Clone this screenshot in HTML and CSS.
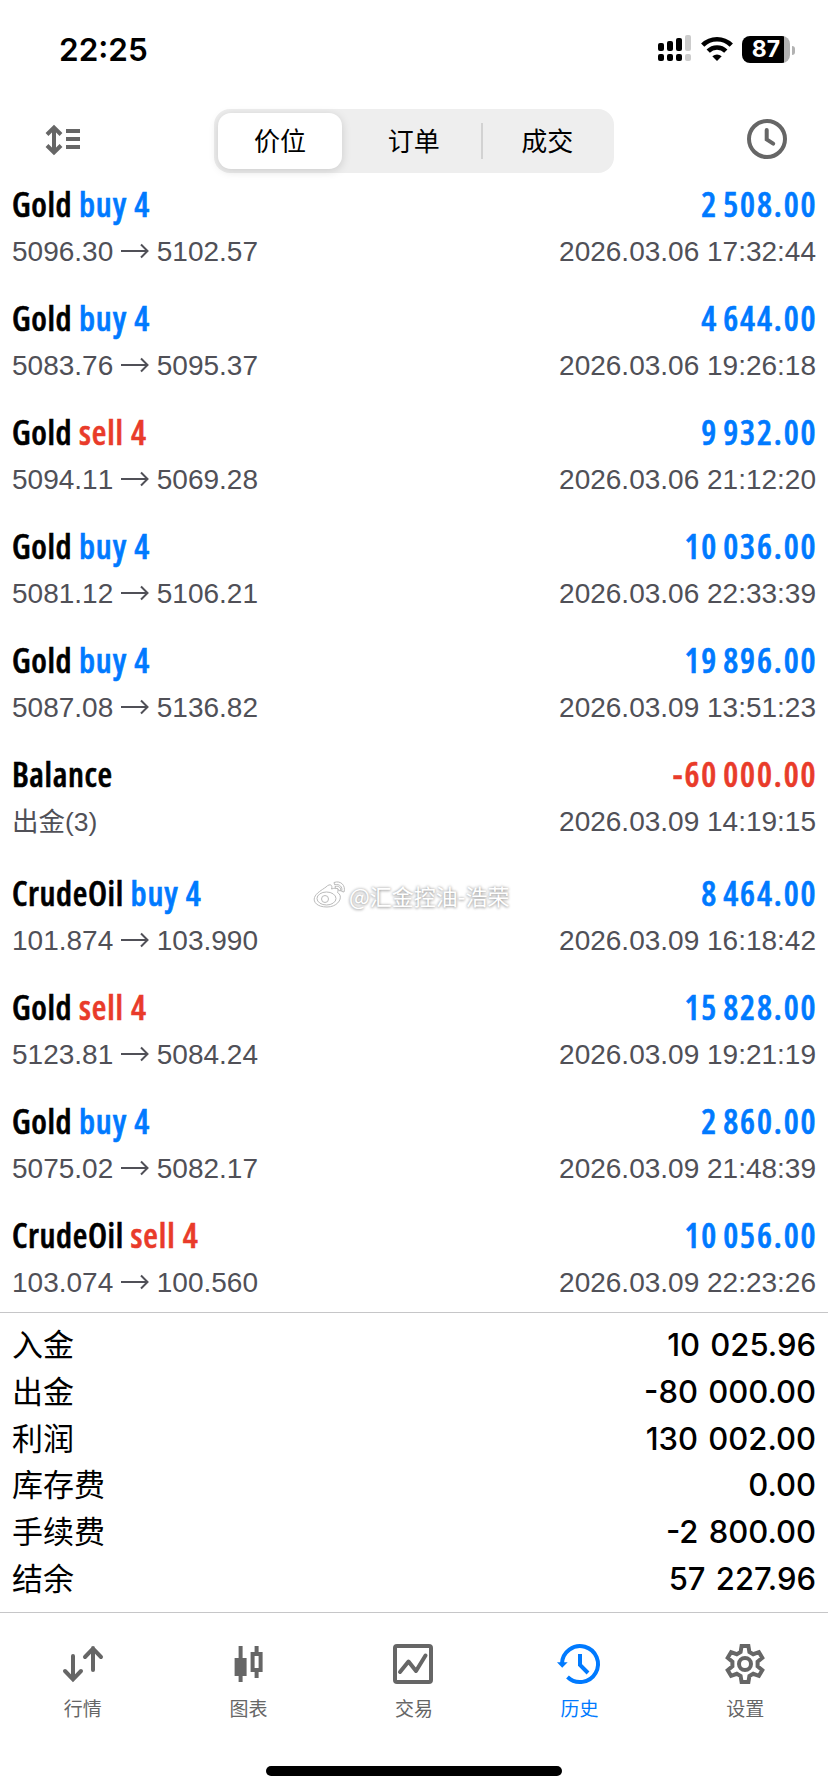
FILE: index.html
```html
<!DOCTYPE html>
<html lang="zh-CN">
<head>
    <meta charset="UTF-8">
    <meta name="viewport" content="width=device-width, initial-scale=1.0">
    <title>历史</title>
    <link rel="stylesheet" href="styles.css">
</head>
<body>

    <div class="status-bar">
        <span class="time">22:25</span>
        <div class="status-icons">
            <svg class="signal" width="34" height="28" viewBox="0 0 34 28">
                <rect x="0" y="8" width="6" height="8" rx="2"/>
                <rect x="9" y="6" width="6" height="10" rx="2"/>
                <rect x="18" y="3" width="6" height="13" rx="2"/>
                <rect class="off" x="27" y="0" width="6" height="16" rx="2"/>
                <rect x="0" y="19" width="6" height="7" rx="2"/>
                <rect x="9" y="19" width="6" height="7" rx="2"/>
                <rect x="18" y="19" width="6" height="7" rx="2"/>
                <rect class="off" x="27" y="19" width="6" height="7" rx="2"/>
            </svg>
            <svg class="wifi" width="32" height="28" viewBox="0 0 32 28">
                <path d="M1.7 10.2A20.3 20.3 0 0 1 30.3 10.2" fill="none" stroke="#000" stroke-width="4.6"/>
                <path d="M7.2 16.2A12.4 12.4 0 0 1 24.8 16.2" fill="none" stroke="#000" stroke-width="4.6"/>
                <path d="M16 26L11.3 21.3Q16 17.6 20.7 21.3Z"/>
            </svg>
            <div class="battery"><span>87</span></div>
            <div class="battery-cap"></div>
        </div>
    </div>

    <div class="toolbar">
        <svg class="sort" width="36" height="32" viewBox="0 0 36 32">
            <path d="M9 4V28M2 10.5L9 3.5L16 10.5M2 21.5L9 28.5L16 21.5M21 7H35M21 15H35M21 23H35"/>
        </svg>
        <div class="segment">
            <div class="seg active">价位</div>
            <div class="seg">订单</div>
            <div class="seg last">成交</div>
        </div>
        <svg class="clock" width="40" height="40" viewBox="0 0 40 40">
            <circle cx="20" cy="20" r="18"/>
            <path d="M19.7 11V20.4L26.2 24.6" stroke-linecap="round"/>
        </svg>
    </div>

    <div class="list">
        <div class="row">
            <div class="title"><b>Gold <i class="buy">buy 4</i></b><b class="profit">2 508.00</b></div>
            <div class="detail"><span>5096.30 <svg class="arrow" viewBox="0 0 28 16"><path d="M0 8H26.5M20 1.5L26.5 8L20 14.5"/></svg> 5102.57</span><span>2026.03.06 17:32:44</span></div>
        </div>
        <div class="row">
            <div class="title"><b>Gold <i class="buy">buy 4</i></b><b class="profit">4 644.00</b></div>
            <div class="detail"><span>5083.76 <svg class="arrow" viewBox="0 0 28 16"><path d="M0 8H26.5M20 1.5L26.5 8L20 14.5"/></svg> 5095.37</span><span>2026.03.06 19:26:18</span></div>
        </div>
        <div class="row">
            <div class="title"><b>Gold <i class="sell">sell 4</i></b><b class="profit">9 932.00</b></div>
            <div class="detail"><span>5094.11 <svg class="arrow" viewBox="0 0 28 16"><path d="M0 8H26.5M20 1.5L26.5 8L20 14.5"/></svg> 5069.28</span><span>2026.03.06 21:12:20</span></div>
        </div>
        <div class="row">
            <div class="title"><b>Gold <i class="buy">buy 4</i></b><b class="profit">10 036.00</b></div>
            <div class="detail"><span>5081.12 <svg class="arrow" viewBox="0 0 28 16"><path d="M0 8H26.5M20 1.5L26.5 8L20 14.5"/></svg> 5106.21</span><span>2026.03.06 22:33:39</span></div>
        </div>
        <div class="row">
            <div class="title"><b>Gold <i class="buy">buy 4</i></b><b class="profit">19 896.00</b></div>
            <div class="detail"><span>5087.08 <svg class="arrow" viewBox="0 0 28 16"><path d="M0 8H26.5M20 1.5L26.5 8L20 14.5"/></svg> 5136.82</span><span>2026.03.09 13:51:23</span></div>
        </div>
        <div class="row balance">
            <div class="title"><b>Balance</b><b class="profit loss">-60 000.00</b></div>
            <div class="detail"><span class="comment">出金(3)</span><span>2026.03.09 14:19:15</span></div>
        </div>
        <div class="row">
            <div class="title"><b>CrudeOil <i class="buy">buy 4</i></b><b class="profit">8 464.00</b></div>
            <div class="detail"><span>101.874 <svg class="arrow" viewBox="0 0 28 16"><path d="M0 8H26.5M20 1.5L26.5 8L20 14.5"/></svg> 103.990</span><span>2026.03.09 16:18:42</span></div>
        </div>
        <div class="row">
            <div class="title"><b>Gold <i class="sell">sell 4</i></b><b class="profit">15 828.00</b></div>
            <div class="detail"><span>5123.81 <svg class="arrow" viewBox="0 0 28 16"><path d="M0 8H26.5M20 1.5L26.5 8L20 14.5"/></svg> 5084.24</span><span>2026.03.09 19:21:19</span></div>
        </div>
        <div class="row">
            <div class="title"><b>Gold <i class="buy">buy 4</i></b><b class="profit">2 860.00</b></div>
            <div class="detail"><span>5075.02 <svg class="arrow" viewBox="0 0 28 16"><path d="M0 8H26.5M20 1.5L26.5 8L20 14.5"/></svg> 5082.17</span><span>2026.03.09 21:48:39</span></div>
        </div>
        <div class="row">
            <div class="title"><b>CrudeOil <i class="sell">sell 4</i></b><b class="profit">10 056.00</b></div>
            <div class="detail"><span>103.074 <svg class="arrow" viewBox="0 0 28 16"><path d="M0 8H26.5M20 1.5L26.5 8L20 14.5"/></svg> 100.560</span><span>2026.03.09 22:23:26</span></div>
        </div>
    </div>

    <div class="summary">
        <div class="sum-row"><span>入金</span><span class="num">10 025.96</span></div>
        <div class="sum-row"><span>出金</span><span class="num">-80 000.00</span></div>
        <div class="sum-row"><span>利润</span><span class="num">130 002.00</span></div>
        <div class="sum-row"><span>库存费</span><span class="num">0.00</span></div>
        <div class="sum-row"><span>手续费</span><span class="num">-2 800.00</span></div>
        <div class="sum-row"><span>结余</span><span class="num">57 227.96</span></div>
    </div>

    <div class="tabs">
        <a class="tab">
            <svg width="44" height="44" viewBox="0 0 44 44">
                <path d="M12 14V37M4 29L12 37.4L20 29M32 28V6M24 15L32 6.6L40 15" stroke-linecap="round"/>
            </svg>
            <span>行情</span>
        </a>
        <a class="tab">
            <svg width="44" height="44" viewBox="0 0 44 44">
                <path d="M14.6 4V40M30.6 4V12M30.6 30V36"/>
                <path d="M14.6 16V34" stroke-width="12"/>
                <rect x="26.6" y="12" width="8" height="16"/>
            </svg>
            <span>图表</span>
        </a>
        <a class="tab">
            <svg width="44" height="44" viewBox="0 0 44 44">
                <rect x="3" y="4" width="36" height="36" rx="2"/>
                <path d="M8 30L16.5 19.5L24 29L33.5 13.5" stroke-linecap="round" stroke-linejoin="round"/>
            </svg>
            <span>交易</span>
        </a>
        <a class="tab current">
            <svg width="44" height="44" viewBox="0 0 44 44">
                <path d="M4 21.5A18 18 0 1 1 9.5 35M22 12V23L30 31"/>
                <path class="solid" d="M-1 20.3H9.7L4.2 25.7Z"/>
            </svg>
            <span>历史</span>
        </a>
        <a class="tab">
            <svg width="44" height="44" viewBox="-22 -22 44 44">
                <path d="M-4.4-12L-3.4-18H3.4L4.4-12L8.2-9.8L13.9-11.9L17.3-6.1L12.6-2.2V2.2L17.3 6.1L13.9 11.9L8.2 9.8L4.4 12L3.4 18H-3.4L-4.4 12L-8.2 9.8L-13.9 11.9L-17.3 6.1L-12.6 2.2V-2.2L-17.3-6.1L-13.9-11.9L-8.2-9.8Z"/>
                <circle r="6"/>
            </svg>
            <span>设置</span>
        </a>
    </div>

    <div class="home-bar"></div>

    <div class="watermark">
        <svg width="34" height="30" viewBox="0 0 34 30">
            <path d="M13 7C17 3 20 5 18.5 9C24 7 26 9 24.5 12.5C31 16 26 27 14 27C4 27 0 22 1.5 17.5C3 13 9 10 13 7Z"/>
            <ellipse cx="13.5" cy="18.5" rx="9.5" ry="6.5"/>
            <circle cx="12" cy="19" r="3.5"/>
            <path d="M21 2.5C28 0 33 6 31 12L28.6 11.4C30 7 26.5 3.5 21.6 4.8ZM22 6.5C26 5.5 28.5 8 27.5 11L25.5 10.3C26 8.8 24.5 8 22.6 8.6Z"/>
        </svg>
        <span>@汇金控油-浩荣</span>
    </div>

</body>
</html>
```
FILE: styles.css
```css
* {
    box-sizing: border-box;
}
body {
    margin: 0;
    width: 828px;
    height: 1792px;
    display: flex;
    flex-direction: column;
    position: relative;
    overflow: hidden;
    background-color: #fff;
    color: #000;
    font-family: "Liberation Sans", "Noto Sans CJK SC", sans-serif;
}

/* status bar */
.status-bar {
    height: 100px;
    padding: 0 34px 0 59px;
    display: flex;
    justify-content: space-between;
    align-items: center;
}
.time {
    margin-top: -1px;
    font-family: Inter, sans-serif;
    font-size: 31.5px;
    font-weight: 600;
}
.status-icons {
    display: flex;
    align-items: center;
}
.signal .off {
    fill: #ccc;
}
.signal {
    margin-right: 9px;
    margin-top: -2px;
}
.wifi {
    margin-right: 9px;
    margin-top: -2px;
}
.battery {
    width: 48px;
    height: 27px;
    margin-top: -1px;
    border-radius: 8px;
    background: linear-gradient(to right, #000 42px, #b2b2b2 42px);
    color: #fff;
    font: 700 23px/27px Inter, sans-serif;
    text-align: center;
}
.battery-cap {
    width: 3px;
    height: 9px;
    margin-left: 2px;
    margin-right: -1px;
    border-radius: 0 4px 4px 0;
    background-color: #b2b2b2;
}

/* toolbar */
.toolbar {
    height: 82px;
    padding: 9px 42px 0 45px;
    display: flex;
    justify-content: space-between;
    align-items: flex-start;
}
.sort, .clock {
    fill: none;
    stroke: #666;
    stroke-width: 4;
}
.sort {
    margin-top: 15px;
}
.clock {
    margin-top: 10px;
    margin-right: -1px;
}
.segment {
    width: 400px;
    height: 64px;
    padding: 4px 0 4px 4px;
    display: flex;
    border-radius: 16px;
    background-color: #eee;
}
.seg {
    flex: 1;
    font: 26px/54px "Noto Sans CJK SC", sans-serif;
    text-align: center;
}
.seg.active {
    flex: none;
    width: 124px;
    margin-right: 5px;
    border-radius: 13px;
    background-color: #fff;
    box-shadow: 0 2px 10px rgba(0, 0, 0, 0.15);
}
.seg.last {
    background: linear-gradient(#d2d2d2, #d2d2d2) no-repeat 0 10px / 2px 36px;
}

/* deals */
.list {
    height: 1130px;
    padding: 2px 12px 0;
}
.row {
    height: 114px;
}
.row.balance {
    height: 119px;
}
.title {
    height: 45px;
    display: flex;
    justify-content: space-between;
    font: 600 33.5px/40px "Open Sans", sans-serif;
    font-stretch: 75%;
}
.title b {
    font-weight: 600;
    letter-spacing: 0.6px;
    -webkit-text-stroke: 0.6px;
}
.title .profit {
    letter-spacing: 1.9px;
    word-spacing: -3px;
    margin-right: -1.5px;
}
.title i {
    font-style: normal;
    letter-spacing: 0.9px;
}
.buy, .profit {
    color: #007aff;
}
.sell, .profit.loss {
    color: #e93b2a;
}
.detail {
    display: flex;
    justify-content: space-between;
    font-size: 28px;
    line-height: 46px;
    font-kerning: none;
    color: #505057;
}
.arrow {
    width: 28px;
    height: 16px;
    vertical-align: 2px;
    fill: none;
    stroke: #505057;
    stroke-width: 2;
}
.comment {
    font-size: 26.5px;
}

/* totals */
.summary {
    height: 300px;
    padding: 9px 12px 0;
    border-top: 1px solid #c6c6c8;
}
.sum-row {
    height: 46.8px;
    display: flex;
    justify-content: space-between;
    font: 31px/42px "Noto Sans CJK SC", sans-serif;
}
.num {
    font-family: Inter, sans-serif;
    font-weight: 500;
    font-size: 31px;
    line-height: 46px;
    word-spacing: 2px;
}

/* bottom tabs */
.tabs {
    height: 154px;
    padding-top: 29px;
    display: flex;
    border-top: 1px solid #c6c6c8;
}
.tab {
    flex: 1;
    display: flex;
    flex-direction: column;
    align-items: center;
    color: #666;
    font: 19px/28px "Noto Sans CJK SC", sans-serif;
}
.tab svg {
    margin-bottom: 8px;
    overflow: visible;
    fill: none;
    stroke: #666;
    stroke-width: 4;
}
.tab.current {
    color: #007aff;
}
.tab.current svg {
    stroke: #007aff;
}
.tab .solid {
    fill: #007aff;
    stroke: none;
}
.home-bar {
    width: 296px;
    height: 10px;
    margin: 0 auto;
    border-radius: 5px;
    background-color: #000;
}

/* watermark lies over the list */
.watermark {
    position: absolute;
    left: 313px;
    top: 879px;
    display: flex;
    align-items: center;
    gap: 2px;
    color: #fff;
    font: 22px/32px "Noto Sans CJK SC", sans-serif;
    text-shadow: 0 0 3px #999, 0 1px 3px #bbb;
}
.watermark svg {
    fill: #fff;
    stroke: #bbb;
    stroke-width: 1;
}
```
